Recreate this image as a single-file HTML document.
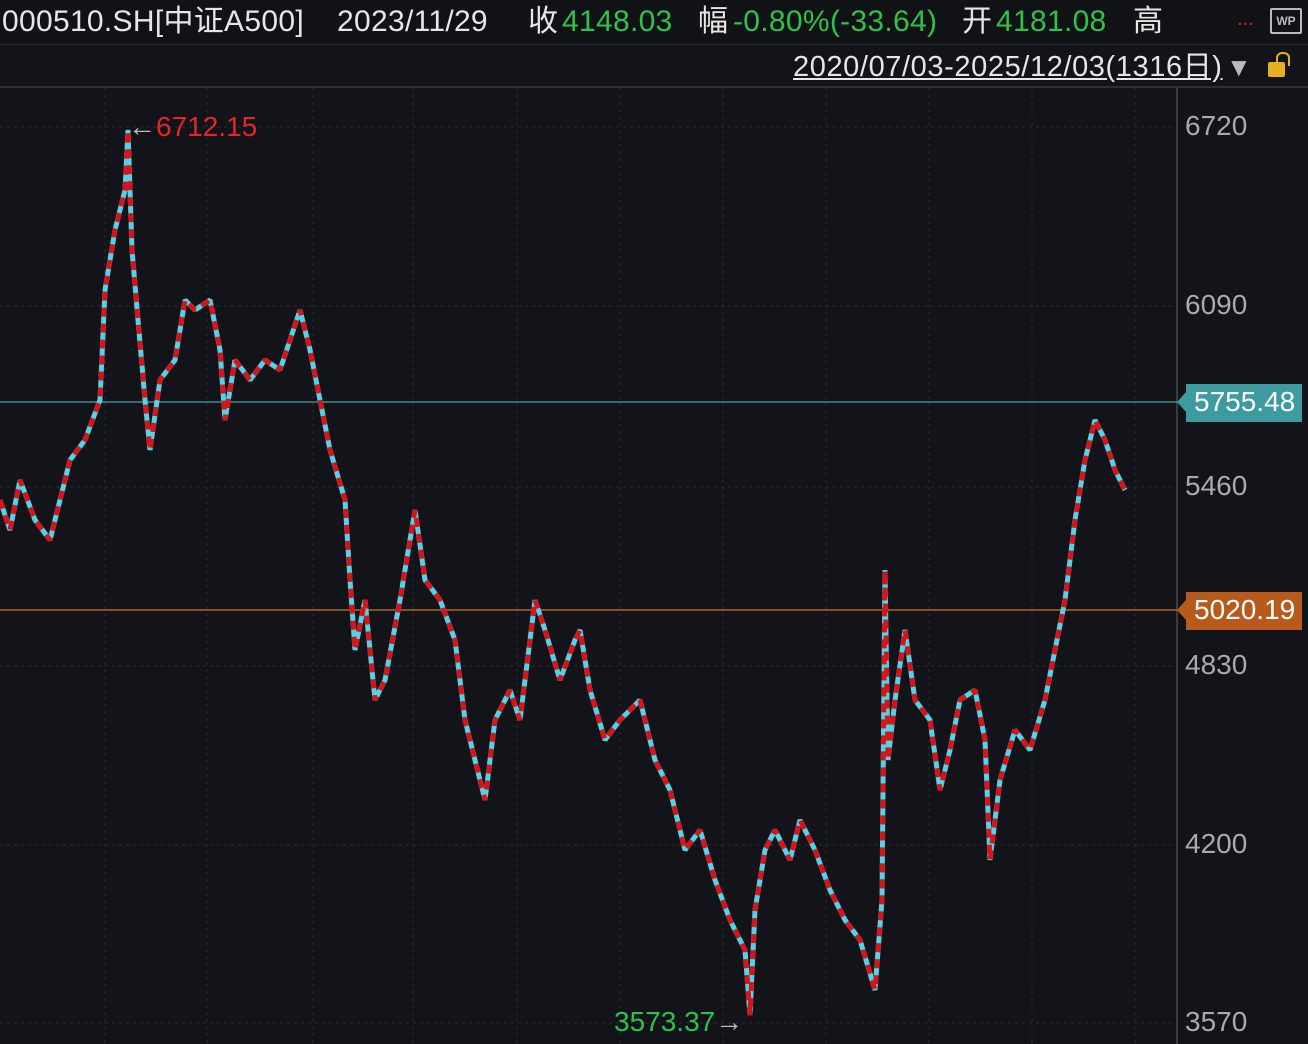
<!DOCTYPE html>
<html><head><meta charset="utf-8"><style>
html,body{margin:0;padding:0;background:#131419;width:1308px;height:1044px;overflow:hidden;font-family:"Liberation Sans","Noto Sans CJK SC",sans-serif;}
.t{position:absolute;white-space:nowrap;}
.h{position:absolute;top:4px;height:36px;line-height:36px;font-size:30px;color:#e6e6e6;white-space:nowrap;letter-spacing:0.3px}
.g{color:#2fc24a}
</style></head><body>
<div style="position:absolute;left:0;top:0;width:1308px;height:44px;background:#111216;"></div>
<div style="position:absolute;left:0;top:44px;width:1308px;height:1px;background:#2a2c33;"></div>
<div style="position:absolute;left:0;top:86px;width:1308px;height:2px;background:#2e3037;"></div>
<div class="h" style="left:2px">000510.SH[中证A500]</div>
<div class="h" style="left:337px">2023/11/29</div>
<div class="h" style="left:528px">收</div>
<div class="h g" style="left:562px">4148.03</div>
<div class="h" style="left:698px">幅</div>
<div class="h g" style="left:733px">-0.80%(-33.64)</div>
<div class="h" style="left:962px">开</div>
<div class="h g" style="left:996px">4181.08</div>
<div class="h" style="left:1133px">高</div>
<div class="t" style="left:1237px;top:8px;font-size:20px;color:#d22;">...</div>
<div style="position:absolute;left:1270px;top:8px;width:28px;height:22px;border:2px solid #bbb;border-radius:2px;color:#bbb;font-size:12px;font-weight:bold;text-align:center;line-height:22px;">WP</div>
<div class="t" style="left:793px;top:49px;height:36px;line-height:36px;font-size:29px;color:#e6e6e6;text-decoration:underline;letter-spacing:0.6px">2020/07/03-2025/12/03(1316日)</div>
<div class="t" style="left:1226px;top:52px;font-size:26px;color:#bbb;">▼</div>
<div style="position:absolute;left:1268px;top:62px;width:17px;height:15px;background:#e8b020;border-radius:2px;"></div>
<div style="position:absolute;left:1276px;top:52px;width:10px;height:12px;border:2px solid #e8b020;border-bottom:none;border-radius:6px 6px 0 0;"></div>
<svg width="1308" height="1044" style="position:absolute;left:0;top:0">
<g stroke="#2a2d36" stroke-width="1" stroke-dasharray="3,4">
<line x1="105" y1="88" x2="105" y2="1044"/><line x1="207" y1="88" x2="207" y2="1044"/><line x1="313" y1="88" x2="313" y2="1044"/><line x1="413" y1="88" x2="413" y2="1044"/><line x1="517" y1="88" x2="517" y2="1044"/><line x1="620" y1="88" x2="620" y2="1044"/><line x1="723" y1="88" x2="723" y2="1044"/><line x1="826" y1="88" x2="826" y2="1044"/><line x1="929" y1="88" x2="929" y2="1044"/><line x1="1032" y1="88" x2="1032" y2="1044"/><line x1="1135" y1="88" x2="1135" y2="1044"/>
<line x1="0" y1="127" x2="1177" y2="127"/><line x1="0" y1="306" x2="1177" y2="306"/><line x1="0" y1="487" x2="1177" y2="487"/><line x1="0" y1="666" x2="1177" y2="666"/><line x1="0" y1="845" x2="1177" y2="845"/><line x1="0" y1="1023" x2="1177" y2="1023"/>
</g>
<line x1="1177" y1="88" x2="1177" y2="1044" stroke="#3a3c44" stroke-width="2"/>
<line x1="0" y1="402" x2="1180" y2="402" stroke="#3f8a90" stroke-width="1.5"/>
<line x1="0" y1="610" x2="1180" y2="610" stroke="#b8602a" stroke-width="1.5"/>
<polygon points="1177,402 1186,392 1186,384 1302,384 1302,422 1186,422 1186,412" fill="#3c9aa0"/>
<polygon points="1177,610 1186,600 1186,592 1302,592 1302,630 1186,630 1186,620" fill="#b85a1c"/>
<polyline fill="none" stroke="#4fd4ea" stroke-width="5" stroke-linejoin="bevel" points="0,500 10,530 20,480 35,520 50,540 60,500 70,460 85,440 100,400 105,290 115,230 125,190 128,130 132,250 138,320 145,400 150,450 160,380 175,360 185,300 195,310 210,300 220,350 225,420 235,360 250,380 265,360 280,370 300,310 310,350 320,400 330,450 345,500 350,580 355,650 365,600 375,700 385,680 400,600 410,540 415,510 425,580 440,600 455,640 465,720 475,760 485,800 495,720 510,690 520,720 530,640 535,600 545,630 560,680 575,640 580,630 590,690 605,740 620,720 640,700 655,760 670,790 685,850 700,830 715,880 730,920 745,950 750,1015 755,910 765,850 775,830 790,860 800,820 815,850 830,890 845,920 860,940 875,990 882,900 885,570 888,760 895,700 905,630 915,700 930,720 940,790 950,750 960,700 975,690 985,740 990,860 1000,780 1015,730 1030,750 1045,700 1055,650 1065,600 1075,520 1085,460 1095,420 1105,440 1115,470 1125,490"/>
<polyline fill="none" stroke="#d4161b" stroke-width="5" stroke-dasharray="9,7" stroke-linejoin="bevel" points="0,500 10,530 20,480 35,520 50,540 60,500 70,460 85,440 100,400 105,290 115,230 125,190 128,130 132,250 138,320 145,400 150,450 160,380 175,360 185,300 195,310 210,300 220,350 225,420 235,360 250,380 265,360 280,370 300,310 310,350 320,400 330,450 345,500 350,580 355,650 365,600 375,700 385,680 400,600 410,540 415,510 425,580 440,600 455,640 465,720 475,760 485,800 495,720 510,690 520,720 530,640 535,600 545,630 560,680 575,640 580,630 590,690 605,740 620,720 640,700 655,760 670,790 685,850 700,830 715,880 730,920 745,950 750,1015 755,910 765,850 775,830 790,860 800,820 815,850 830,890 845,920 860,940 875,990 882,900 885,570 888,760 895,700 905,630 915,700 930,720 940,790 950,750 960,700 975,690 985,740 990,860 1000,780 1015,730 1030,750 1045,700 1055,650 1065,600 1075,520 1085,460 1095,420 1105,440 1115,470 1125,490"/>
</svg>
<div class="t" style="left:128px;top:111px;font-size:28px;color:#e02828;"><span style="color:#bbb">←</span>6712.15</div>
<div class="t" style="left:614px;top:1006px;font-size:28px;color:#2fc24a;">3573.37<span style="color:#bbb">→</span></div>
<div class="t" style="left:1185px;top:110px;font-size:28px;color:#aaa;">6720</div>
<div class="t" style="left:1185px;top:289px;font-size:28px;color:#aaa;">6090</div>
<div class="t" style="left:1185px;top:470px;font-size:28px;color:#aaa;">5460</div>
<div class="t" style="left:1185px;top:649px;font-size:28px;color:#aaa;">4830</div>
<div class="t" style="left:1185px;top:828px;font-size:28px;color:#aaa;">4200</div>
<div class="t" style="left:1185px;top:1006px;font-size:28px;color:#aaa;">3570</div>
<div class="t" style="left:1194px;top:386px;font-size:28px;color:#fff;">5755.48</div>
<div class="t" style="left:1194px;top:594px;font-size:28px;color:#fff;">5020.19</div>
</body></html>
